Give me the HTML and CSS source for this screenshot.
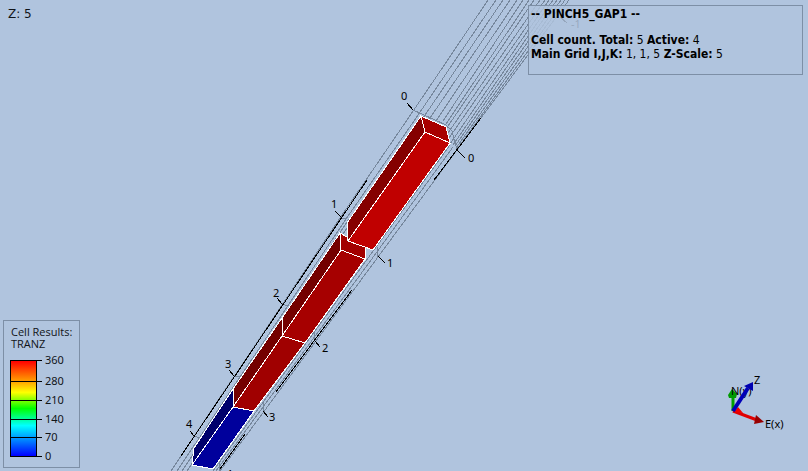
FILE: index.html
```html
<!DOCTYPE html>
<html lang="en"><head><meta charset="utf-8"><title>PINCH5_GAP1</title>
<link rel="stylesheet" href="styles.css"></head>
<body>
<svg class="scene" viewBox="0 0 808 471" preserveAspectRatio="xMinYMin slice" role="img" aria-label="Grid cells">
<g class="grid">
<path d="M488 0L445 64 407 120 340 218 171 471"/>
<path d="M496 0L414 121 346 219 177 471"/>
<path d="M503 0L421 121M510 0L428 121M517 0L436 121M523 0L443 121M529 0L446 124M534 0L446 129M540 0L448 133M545 0L449 138M549 0L450 144M553 0L453 145M557 0L455 146M561 0L456 148M565 0L457 149M569 0L457 150"/>
<path d="M349 219L182 471M353 219L187 471"/>
<path d="M450 145L371 254 213 471M453 147L374 256 216 471M457 150L378 257 220 471"/>
<path d="M413 110L446 125 452 131 457 150M341 218L346 219M377 247V257M282 304L288 306M314 330V341M234 376L240 377M263 402V411M194 436L200 438M219 462V471"/>
</g>
<g class="axis">
<path d="M367 180L181 456M481 118L434 180M352 290L276 392M245 434L220 469"/>
<path d="M407 103L413 110M457 150L465 158M335 211L342 218M378 256L385 263M277 298L282 304M315 341L320 347M229 370L234 376M263 411L268 417M190 431L194 436M560 17L567 23"/>
</g>
<g class="cells">
<path fill="#a30000" d="M340 233L365 247V259L341 250Z"/>
<path fill="#740000" d="M340 233L341 250 282 336V318Z"/>
<path fill="#a60000" d="M341 250L365 259 305 343 282 336Z"/>
<path fill="#740000" d="M282 318V336L233 407V389Z"/>
<path fill="#a00000" d="M282 336L305 343 254 411 233 407Z"/>
<path fill="#00006c" d="M233 389V407L192 465 194 448Z"/>
<path fill="#00009c" d="M233 407L254 411 213 469 192 465Z"/>
<path fill="#a80000" d="M421 116L446 127 450 143 425 132Z"/>
<path fill="#850000" d="M421 116L425 132 348 241 347 223Z"/>
<path fill="#c00000" d="M425 132L450 143 373 250 348 241Z"/>
</g>
<g class="marks">
<text x="571" y="28">-1</text>
<text x="401" y="100">0</text><text x="468" y="162">0</text>
<text x="331" y="208">1</text><text x="387" y="267">1</text>
<text x="273" y="297">2</text><text x="322" y="352">2</text>
<text x="225" y="368">3</text><text x="269" y="421">3</text>
<text x="186" y="428">4</text><text x="226" y="478">4</text>
</g>
<g class="triad">
<path stroke="#00a000" stroke-width="3" d="M733 411V395"/><path fill="#009a00" d="M728 395L732 389 737 394 736 398 729 398Z"/>
<path stroke="#e00000" stroke-width="3" d="M733 411L757 420"/><path fill="#f00000" d="M734 412L738 407 743 413Z"/><path fill="#980000" d="M756 415L764 422 754 424Z"/>
<text x="731" y="395">N(y)</text>
<path stroke="#0000b8" stroke-width="4" d="M733 411L748 388"/><path fill="#0000b0" d="M753 382L753 391 744 386Z"/>
<text x="754" y="384">Z</text><text x="765" y="428">E(x)</text>
</g>
</svg>
<main class="overlay">
<p class="scale">Z: 5</p>
<section class="info">
<h1>-- PINCH5_GAP1 --</h1>
<p><b>Cell count. Total:</b> 5 <b>Active:</b> 4</p>
<p><b>Main Grid I,J,K:</b> 1, 1, 5 <b>Z-Scale:</b> 5</p>
</section>
<section class="legend">
<h2>Cell Results:</h2>
<p>TRANZ</p>
<div class="ramp">
<div class="bar"></div>
<ul><li>360</li><li>280</li><li>210</li><li>140</li><li>70</li><li>0</li></ul>
</div>
</section>
</main>
</body></html>
```

FILE: styles.css
```css
* { box-sizing: border-box; margin: 0; padding: 0; }
body { background: #b0c4de; color: #101418; font: 11px/12px "Noto Sans", sans-serif; overflow: hidden; }
.scene { position: absolute; inset: 0; width: 100%; height: 100%; z-index: -1; }
.grid, .axis { fill: none; stroke: #76879c; shape-rendering: crispEdges; }
.axis { stroke: #000; }
.cells { stroke: #fff; shape-rendering: crispEdges; }
.overlay { display: grid; grid-template: auto 1fr / 1fr 275px; height: 100vh; padding: 5px 5px 3px 3px; }
.scale { font: 12px/18px "DejaVu Sans", sans-serif; padding-left: 5px; }
.info { height: 70px; padding: 1px 2px; border: 1px solid #7d8fa6; background: rgba(176, 196, 222, .85); color: #000; font: 12px/14px "DejaVu Sans Condensed", "DejaVu Sans", sans-serif; }
.info h1 { font-size: 12px; margin-bottom: 12px; }
.legend { align-self: end; width: 77px; height: 148px; padding: 5px 6px; border: 1px solid #7d8fa6; }
.legend h2, .legend p { font: 11px/12px "Open Sans", "Noto Sans", sans-serif; padding-left: 1px; }
.ramp { display: flex; margin-top: 10px; }
.bar { width: 27px; height: 97px; border: 1px solid #000; background: linear-gradient(red, orange 22%, yellow 33%, lime 50%, cyan 68%, blue); }
ul { list-style: none; display: grid; grid-template-rows: 21px 19px 19px 18px 19px 12px; margin: -6px 0; }
li { position: relative; padding-left: 8px; }
li::before { content: ""; position: absolute; left: -26px; top: 6px; width: 31px; height: 1px; background: #000; }
```
